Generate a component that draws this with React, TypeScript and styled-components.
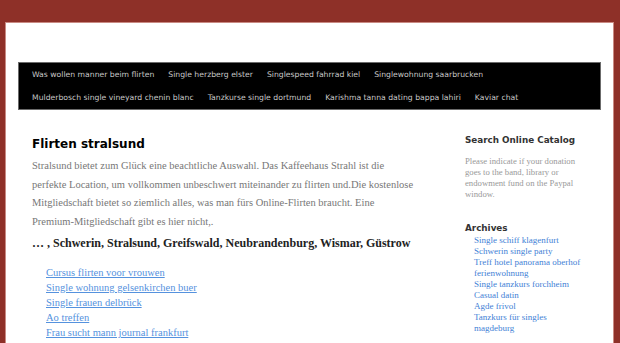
import React from "react";
import styled, { createGlobalStyle } from "styled-components";

const GlobalStyle = createGlobalStyle`
  html, body {
    margin: 0;
    padding: 0;
    background: #8e3028;
  }
  body {
    font-family: "Liberation Serif", serif;
  }
`;

const navItems = [
  "Was wollen manner beim flirten",
  "Single herzberg elster",
  "Singlespeed fahrrad kiel",
  "Singlewohnung saarbrucken",
  "Mulderbosch single vineyard chenin blanc",
  "Tanzkurse single dortmund",
  "Karishma tanna dating bappa lahiri",
  "Kaviar chat",
];

const links = [
  "Cursus flirten voor vrouwen",
  "Single wohnung gelsenkirchen buer",
  "Single frauen delbrück",
  "Ao treffen",
  "Frau sucht mann journal frankfurt",
];

const archives = [
  "Single schiff klagenfurt",
  "Schwerin single party",
  "Treff hotel panorama oberhof ferienwohnung",
  "Single tanzkurs forchheim",
  "Casual datin",
  "Agde frivol",
  "Tanzkurs für singles magdeburg",
];

function App() {
  return (
    <>
      <GlobalStyle />
      <Page>
        <Header />
        <Nav>
          {navItems.map((item) => (
            <NavLink key={item} href="#">
              {item}
            </NavLink>
          ))}
        </Nav>
        <Columns>
          <Main>
            <Title>Flirten stralsund</Title>
            <Text>
              Stralsund bietet zum Glück eine beachtliche Auswahl. Das Kaffeehaus Strahl ist die
              perfekte Location, um vollkommen unbeschwert miteinander zu flirten und.Die
              kostenlose Mitgliedschaft bietet so ziemlich alles, was man fürs Online-Flirten
              braucht. Eine Premium-Mitgliedschaft gibt es hier nicht,.
            </Text>
            <Cities>… , Schwerin, Stralsund, Greifswald, Neubrandenburg, Wismar, Güstrow</Cities>
            <LinkList>
              {links.map((l) => (
                <li key={l}>
                  <BodyLink href="#">{l}</BodyLink>
                </li>
              ))}
            </LinkList>
          </Main>
          <Sidebar>
            <WidgetTitle>Search Online Catalog</WidgetTitle>
            <WidgetText>
              Please indicate if your donation goes to the band, library or endowment fund on the
              Paypal window.
            </WidgetText>
            <WidgetTitle $tight>Archives</WidgetTitle>
            <ArchiveList>
              {archives.map((a) => (
                <li key={a}>
                  <ArchiveLink href="#">{a}</ArchiveLink>
                </li>
              ))}
            </ArchiveList>
          </Sidebar>
        </Columns>
      </Page>
    </>
  );
}

export default App;

const Page = styled.div`
  margin: 23px 7px 0 6px;
  background: #fff;
  height: 320px;
  overflow: hidden;
  box-shadow: 0 0 0 1px #c98a83;
`;

const Header = styled.div`
  height: 39px;
`;

const Nav = styled.nav`
  margin: 0 12px;
  background: #000;
  border: 1px solid #6b6b6b;
  display: flex;
  flex-wrap: wrap;
  column-gap: 14px;
  padding: 0 10px 0 13px;
`;

const NavLink = styled.a`
  font-family: "DejaVu Sans", sans-serif;
  font-size: 7.7px;
  line-height: 23px;
  color: #c8c8c8;
  text-decoration: none;
  white-space: nowrap;
`;

const Columns = styled.div`
  display: grid;
  grid-template-columns: 386px 118px;
  column-gap: 47px;
  padding: 24px 0 0 26px;
`;

const Main = styled.main`
  min-width: 0;
`;

const Title = styled.h1`
  margin: 0 0 3px;
  font-family: "DejaVu Sans", sans-serif;
  font-weight: bold;
  font-size: 12px;
  line-height: 20px;
  color: #000;
`;

const Text = styled.p`
  margin: 0 0 1px;
  font-family: "Liberation Serif", serif;
  font-size: 10.5px;
  line-height: 18.7px;
  color: #777;
`;

const Cities = styled.h2`
  margin: 0 0 12px;
  font-family: "Liberation Serif", serif;
  font-weight: bold;
  font-size: 12px;
  line-height: 20px;
  color: #222;
  white-space: nowrap;
`;

const LinkList = styled.ul`
  list-style: none;
  margin: 0;
  padding: 0 0 0 14px;
  li {
    font-size: 10.5px;
    line-height: 15px;
  }
`;

const BodyLink = styled.a`
  font-family: "Liberation Serif", serif;
  font-size: 10.5px;
  color: #5592de;
  text-decoration: underline;
`;

const Sidebar = styled.aside`
  padding-top: 0;
`;

const WidgetTitle = styled.h3<{ $tight?: boolean }>`
  margin: ${(p) => (p.$tight ? "22px 0 0" : "0 0 9px")};
  font-family: "DejaVu Sans", sans-serif;
  font-weight: bold;
  font-size: 8.8px;
  line-height: 13px;
  color: #333;
`;

const WidgetText = styled.p`
  margin: 0;
  font-family: "Liberation Serif", serif;
  font-size: 8.7px;
  line-height: 11px;
  color: #999;
`;

const ArchiveList = styled.ul`
  list-style: none;
  margin: 0;
  padding: 0 0 0 9px;
  li {
    font-size: 9px;
    line-height: 11px;
  }
`;

const ArchiveLink = styled.a`
  font-family: "Liberation Serif", serif;
  font-size: 9px;
  color: #3f7fd6;
  text-decoration: none;
`;
